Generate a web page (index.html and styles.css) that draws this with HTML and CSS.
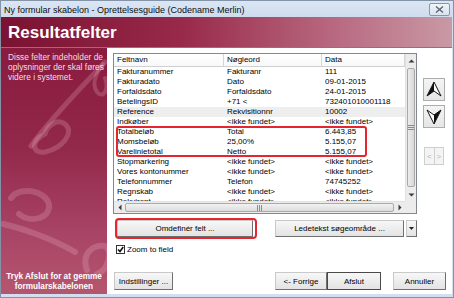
FILE: index.html
```html
<!DOCTYPE html>
<html lang="da">
<head>
<meta charset="utf-8">
<title>Ny formular skabelon</title>
<link rel="stylesheet" href="styles.css">
</head>
<body>
<div class="window">
  <div class="titlebar">
    <span class="title">Ny formular skabelon - Oprettelsesguide (Codename Merlin)</span>
    <span class="close"><svg viewBox="0 0 9 7" width="9" height="7"><path d="M1 0.5 L8 6.5 M8 0.5 L1 6.5" stroke="#5a6070" stroke-width="1.3" fill="none"/></svg></span>
  </div>
  <div class="header"><h1 class="heading">Resultatfelter</h1></div>
  <div class="body">
    <aside class="side">
      <svg class="swirl" viewBox="0 0 106 246" width="106" height="246" aria-hidden="true">
        <g fill="none" stroke="#f6c2d4" stroke-opacity="0.22" stroke-linecap="round">
          <path d="M30 98 C50 70 80 40 104 14" stroke-width="5"/>
          <path d="M102 16 C96 24 90 36 96 44 C103 52 108 40 104 30" stroke-width="4"/>
          <path d="M44 86 C30 92 30 106 44 104 C62 100 74 84 64 76 C56 70 46 78 44 86" stroke-width="5"/>
          <path d="M10 150 C18 138 44 142 48 156 C50 170 30 176 18 166" stroke-width="6"/>
          <path d="M2 176 C20 180 50 190 74 204" stroke-width="6"/>
          <path d="M86 222 C80 206 92 196 104 198 C112 202 108 222 96 226" stroke-width="6"/>
        </g>
      </svg>
      <p class="intro">Disse felter indeholder de<br>oplysninger der skal føres<br>videre i systemet.</p>
      <p class="hint">Tryk Afslut for at gemme<br>formularskabelonen</p>
    </aside>
    <main class="main">
      <div class="top">
        <div class="listbox">
          <div class="table">
            <div class="thead"><span>Feltnavn</span><span>Nøgleord</span><span>Data</span></div>
            <div class="row"><span>Fakturanummer</span><span>Fakturanr</span><span>111</span></div>
            <div class="row"><span>Fakturadato</span><span>Dato</span><span>09-01-2015</span></div>
            <div class="row"><span>Forfaldsdato</span><span>Forfaldsdato</span><span>24-01-2015</span></div>
            <div class="row"><span>BetelingsID</span><span>+71 &lt;</span><span>732401010001118</span></div>
            <div class="row selected"><span>Reference</span><span>Rekvisitionnr</span><span>10002</span></div>
            <div class="row"><span>Indkøber</span><span>&lt;ikke fundet&gt;</span><span>&lt;ikke fundet&gt;</span></div>
            <div class="row"><span>Totalbeløb</span><span>Total</span><span>6.443,85</span></div>
            <div class="row"><span>Momsbeløb</span><span>25,00%</span><span>5.155,07</span></div>
            <div class="row"><span>Varelinietotal</span><span>Netto</span><span>5.155,07</span></div>
            <div class="row"><span>Stopmarkering</span><span>&lt;ikke fundet&gt;</span><span>&lt;ikke fundet&gt;</span></div>
            <div class="row"><span>Vores kontonummer</span><span>&lt;ikke fundet&gt;</span><span>&lt;ikke fundet&gt;</span></div>
            <div class="row"><span>Telefonnummer</span><span>Telefon</span><span>74745252</span></div>
            <div class="row"><span>Regnskab</span><span>&lt;ikke fundet&gt;</span><span>&lt;ikke fundet&gt;</span></div>
            <div class="row"><span>Rekvirent</span><span>&lt;ikke fundet&gt;</span><span>&lt;ikke fundet&gt;</span></div>
            <div class="mark"></div>
          </div>
          <div class="vscroll">
            <span class="sbtn"><svg viewBox="0 0 7 4" width="7" height="4"><path d="M0.5 3.5 L3.5 0.5 L6.5 3.5Z" fill="#3c3c3c"/></svg></span>
            <span class="vthumb"><svg viewBox="0 0 6 5" width="6" height="5"><path d="M0 0.5H6M0 2.5H6M0 4.5H6" stroke="#8c8c8c" stroke-width="1"/></svg></span>
            <span class="sbtn"><svg viewBox="0 0 7 4" width="7" height="4"><path d="M0.5 0.5 L3.5 3.5 L6.5 0.5Z" fill="#3c3c3c"/></svg></span>
          </div>
          <div class="hscroll">
            <span class="hbtn"><svg viewBox="0 0 4 7" width="4" height="7"><path d="M3.5 0.5 L0.5 3.5 L3.5 6.5Z" fill="#3c3c3c"/></svg></span>
            <span class="hthumb"><svg viewBox="0 0 5 6" width="5" height="6"><path d="M0.5 0V6M2.5 0V6M4.5 0V6" stroke="#8c8c8c" stroke-width="1"/></svg></span>
            <span class="hbtn"><svg viewBox="0 0 4 7" width="4" height="7"><path d="M0.5 0.5 L3.5 3.5 L0.5 6.5Z" fill="#3c3c3c"/></svg></span>
          </div>
          <div class="corner"></div>
        </div>
        <div class="nav">
          <button class="navbtn" type="button" aria-label="Flyt op">
            <svg viewBox="0 0 22 23" width="22" height="23">
              <path d="M11 4 L18 18 L11 13 L4 18 Z" fill="#fff" stroke="#111" stroke-width="1" stroke-linejoin="round"/>
              <path d="M11 4 L11 13 L4 18 Z" fill="#111"/>
            </svg>
          </button>
          <button class="navbtn" type="button" aria-label="Flyt ned">
            <svg viewBox="0 0 22 23" width="22" height="23">
              <path d="M4 5 L11 10 L18 5 L11 19 Z" fill="#fff" stroke="#111" stroke-width="1" stroke-linejoin="round"/>
              <path d="M18 5 L11 10 L11 19 Z" fill="#111"/>
            </svg>
          </button>
          <div class="pager"><span>&lt;</span><span>&gt;</span></div>
        </div>
      </div>
      <div class="actions">
        <div class="marked">
          <button class="btn wide" type="button">Omdefinér felt ...</button>
        </div>
        <button class="btn lede" type="button">Ledetekst søgeområde ...</button>
        <button class="btn drop" type="button"><svg viewBox="0 0 5 3" width="5" height="3"><path d="M0 0 L5 0 L2.5 3Z" fill="#222"/></svg></button>
      </div>
      <label class="check"><span class="box"><svg viewBox="0 0 7 7" width="7" height="7"><path d="M1 3.5 L3 5.5 L6.2 1" stroke="#111" stroke-width="1.6" fill="none"/></svg></span>Zoom to field</label>
      <div class="footer">
        <button class="btn settings" type="button">Indstillinger ...</button>
        <button class="btn back" type="button">&lt;- Forrige</button>
        <button class="btn finish" type="button">Afslut</button>
        <button class="btn cancel" type="button">Annuller</button>
      </div>
    </main>
  </div>
</div>
</body>
</html>
```

FILE: styles.css
```css
* { box-sizing: border-box; }
html, body { margin: 0; padding: 0; }
body {
  width: 454px;
  height: 298px;
  overflow: hidden;
  background: #fff;
  font-family: "Liberation Sans", Arial, sans-serif;
  color: #000;
}

.window {
  width: 454px;
  height: 298px;
  display: flex;
  flex-direction: column;
  border: 1px solid #8393a8;
  padding: 0 1px 3px 0;
  background: #d2dff0;
}

/* title bar */
.titlebar {
  height: 16px;
  flex: none;
  display: flex;
  align-items: center;
  justify-content: space-between;
  padding: 1px 2px 0 3px;
  background: linear-gradient(#dbe6f4, #cfdcee);
}
.title { font-size: 9px; white-space: nowrap; color: #0c0c0c; }
.close {
  width: 21px;
  height: 13px;
  display: flex;
  align-items: center;
  justify-content: center;
  border: 1px solid #8796ab;
  border-radius: 2px;
  background: linear-gradient(#eef3f9, #d9e3ef);
}

/* crimson header */
.header {
  height: 31px;
  flex: none;
  display: flex;
  align-items: center;
  padding-left: 7px;
  background: linear-gradient(90deg, #7a1232 0%, #98294a 40%, #b96b82 75%, #c999a5 100%);
  border-bottom: 1px solid #b4607a;
}
.heading {
  margin: 0;
  font-size: 17px;
  font-weight: bold;
  color: #fff;
  line-height: 1;
  padding-top: 1px;
}

.body {
  flex: 1;
  display: flex;
  min-height: 0;
}

/* left panel */
.side {
  position: relative;
  width: 106px;
  flex: none;
  display: flex;
  flex-direction: column;
  justify-content: space-between;
  background: linear-gradient(#891b3e 0%, #92284a 40%, #a84466 75%, #b5566f 100%);
  color: #fff;
  overflow: hidden;
}
.swirl { position: absolute; left: 0; top: 0; }
.intro {
  position: relative;
  margin: 4px 0 0 7px;
  font-size: 8.4px;
  line-height: 10px;
  white-space: nowrap;
  color: #f3dde4;
}
.hint {
  position: relative;
  margin: 0 0 3px 0;
  text-align: center;
  font-size: 8.2px;
  font-weight: bold;
  line-height: 9.5px;
  white-space: nowrap;
}

/* main area */
.main {
  flex: 1;
  display: flex;
  flex-direction: column;
  padding: 5px 6px 4px 6px;
  background: #fff;
  font-size: 8px;
}
.top { display: flex; gap: 6px; }

.listbox {
  width: 304px;
  height: 161px;
  border: 1px solid #828790;
  display: grid;
  grid-template-columns: 1fr 11px;
  grid-template-rows: 1fr 12px;
  background: #fff;
}
.table {
  position: relative;
  overflow: hidden;
  line-height: 10px;
}
.thead, .row {
  display: grid;
  grid-template-columns: 110px 98px 1fr;
  white-space: nowrap;
}
.thead {
  height: 13px;
  line-height: 12px;
  border-bottom: 1px solid #d0d0d0;
  background: linear-gradient(#fff, #f7f8fa);
}
.thead span { padding-left: 3px; border-right: 1px solid #d5d5d5; }
.row { height: 10px; }
.row span { padding-left: 3px; overflow: hidden; }
.row.selected { background: #eeeeee; }
.mark {
  position: absolute;
  top: 72px;
  left: 2px;
  width: 251px;
  height: 31px;
  border: 2px solid #e3262f;
  border-radius: 3px;
}

.vscroll {
  display: flex;
  flex-direction: column;
  background: #ececec;
  border-left: 1px solid #e2e2e2;
}
.sbtn {
  height: 13px;
  flex: none;
  display: flex;
  align-items: center;
  justify-content: center;
}
.vthumb {
  flex: 1;
  margin: 1px 1px;
  border: 1px solid #a9a9a9;
  border-radius: 2px;
  background: linear-gradient(90deg, #ececec, #d8d8d8);
  display: flex;
  align-items: center;
  justify-content: center;
}
.hscroll {
  display: flex;
  background: #ececec;
  border-top: 1px solid #e2e2e2;
}
.hbtn {
  width: 11px;
  flex: none;
  display: flex;
  align-items: center;
  justify-content: center;
}
.hthumb {
  flex: 1;
  margin: 1px 0;
  border: 1px solid #a9a9a9;
  border-radius: 2px;
  background: linear-gradient(#f2f2f2, #dcdcdc);
  display: flex;
  align-items: center;
  justify-content: center;
}
.corner { background: #ececec; }

/* right nav buttons */
.nav {
  width: 22px;
  display: flex;
  flex-direction: column;
  padding-top: 25px;
  gap: 4px;
}
.navbtn {
  width: 22px;
  height: 23px;
  padding: 0;
  border: 1px solid #adadad;
  background: linear-gradient(#f4f4f4, #e6e6e6);
  display: block;
}
.navbtn svg { display: block; margin: -1px; }
.pager {
  margin: 15px 0 0 1px;
  width: 20px;
  height: 18px;
  display: flex;
  border: 1px solid #cfcfcf;
  background: #f4f4f4;
  color: #b4b4b4;
  font-size: 8px;
}
.pager span {
  flex: 1;
  display: flex;
  align-items: center;
  justify-content: center;
}
.pager span + span { border-left: 1px solid #cfcfcf; }

/* buttons */
.btn {
  font-family: inherit;
  font-size: 8px;
  color: #000;
  padding: 0;
  height: 17px;
  border: 1px solid;
  border-color: #c9c9c9 #6f6f6f #6f6f6f #c9c9c9;
  background: linear-gradient(#f7f7f7, #e3e3e3);
  border-radius: 0;
}

.actions {
  display: flex;
  align-items: center;
  margin-top: 6px;
  width: 304px;
}
.marked {
  position: relative;
  margin-left: 4px;
}
.marked::after {
  content: "";
  position: absolute;
  top: -2px;
  left: -2px;
  right: -4px;
  bottom: -2px;
  border: 2px solid #e3262f;
  border-radius: 4px;
}
.wide { width: 136px; display: block; }
.lede { width: 129px; margin-left: 22px; }
.drop {
  width: 11px;
  margin-left: 2px;
  display: flex;
  align-items: center;
  justify-content: center;
}

.check {
  display: flex;
  align-items: center;
  gap: 2px;
  margin: 8px 0 0 3px;
  height: 9px;
  white-space: nowrap;
}
.box {
  width: 9px;
  height: 9px;
  border: 1px solid #333;
  background: #fff;
  display: flex;
  align-items: center;
  justify-content: center;
}

.footer {
  margin-top: auto;
  display: flex;
  align-items: flex-end;
}
.footer .btn { height: 18px; }
.settings { width: 59px; margin-left: 1px; }
.back { width: 52px; margin-left: auto; }
.finish { width: 54px; border-color: #4a4a4a; }
.cancel { width: 53px; margin-left: 12px; }
```
